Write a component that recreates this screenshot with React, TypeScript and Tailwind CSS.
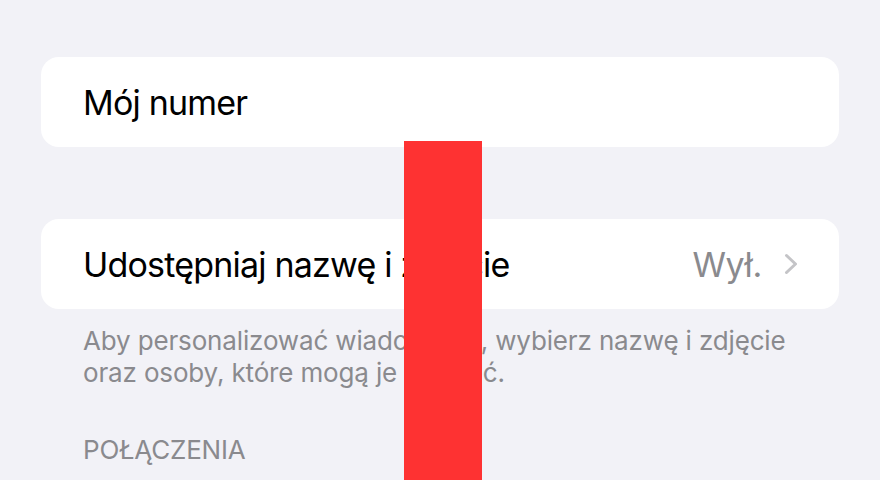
import React from "react";

export default function App() {
  return (
    <div
      className="relative h-[480px] w-[880px] overflow-hidden bg-[#f2f2f7] px-[41px] pt-[57px]"
      style={{ fontFamily: "Inter, 'Noto Sans', 'Liberation Sans', sans-serif" }}
    >
      <div className="flex h-[90px] items-center rounded-[18px] bg-white pl-[42px]">
        <span className="text-[34px] tracking-[-0.8px] text-black">Mój numer</span>
      </div>

      <div className="mt-[72px] flex h-[90px] items-center justify-between rounded-[18px] bg-white pl-[42px] pr-[41px]">
        <span className="text-[34px] tracking-[-0.8px] text-black">Udostępniaj nazwę i zdjęcie</span>
        <div className="flex items-center gap-[22px]">
          <span className="text-[34px] tracking-[-0.3px] text-[#8a8a8e]">Wył.</span>
          <svg width="14" height="22" viewBox="0 0 14 22" fill="none">
            <polyline
              points="2.5,2.5 11.5,11 2.5,19.5"
              stroke="#c4c4c7"
              strokeWidth="3"
              strokeLinecap="round"
              strokeLinejoin="round"
            />
          </svg>
        </div>
      </div>

      <p className="mt-[16px] px-[42px] text-[26px] leading-[32px] tracking-[-0.15px] text-[#8a8a8e]">
        Aby personalizować wiadomości, wybierz nazwę i zdjęcie
        <br />
        oraz osoby, które mogą je widzieć.
      </p>

      <p className="mt-[45px] px-[42px] text-[26px] leading-[32px] tracking-[-0.2px] text-[#8a8a8e]">POŁĄCZENIA</p>

      <div className="absolute left-[404px] top-[141px] h-[339px] w-[78px] bg-[#fe3232]" />
    </div>
  );
}
